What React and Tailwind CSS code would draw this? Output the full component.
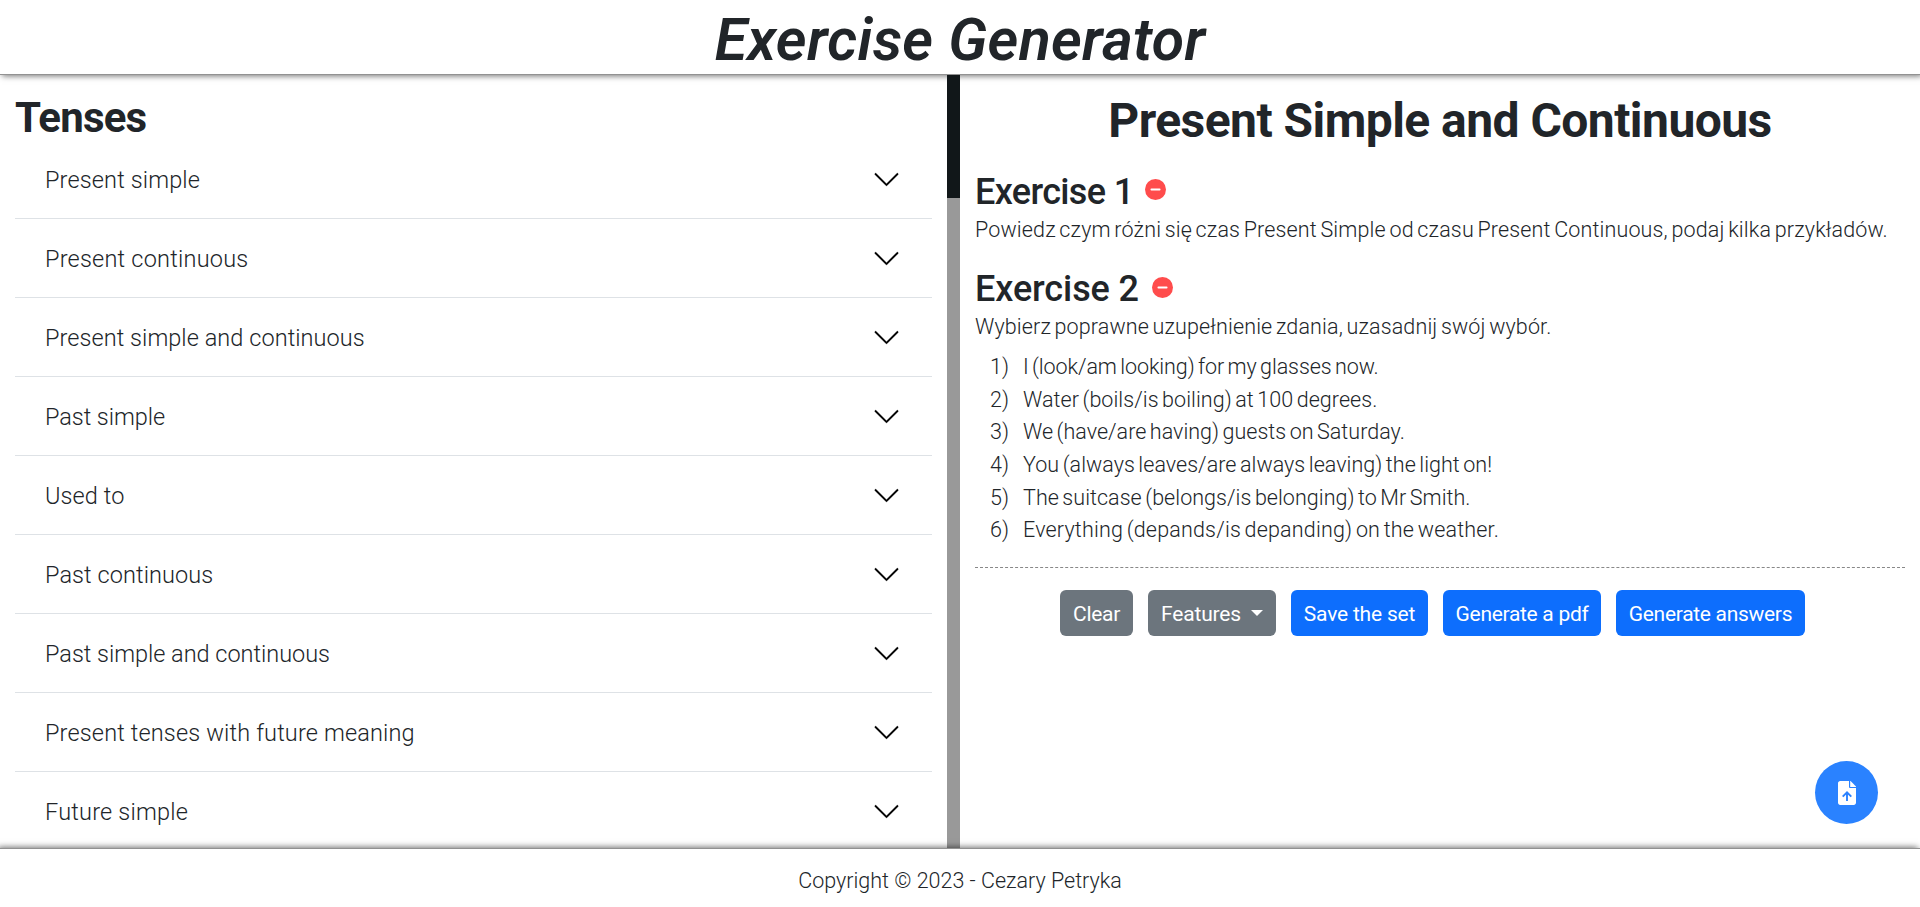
const topics = [
  ["Present simple", "tracking-[0.14px]"],
  ["Present continuous", "tracking-[0.22px]"],
  ["Present simple and continuous", "tracking-[0.06px]"],
  ["Past simple", "tracking-[-0.06px]"],
  ["Used to", "tracking-[0.1px]"],
  ["Past continuous", "tracking-[0.08px]"],
  ["Past simple and continuous", "tracking-[-0.02px]"],
  ["Present tenses with future meaning", "tracking-[0.15px]"],
  ["Future simple", "tracking-[0.2px]"],
];

const sentences = [
  ["I (look/am looking) for my glasses now.", "tracking-[-0.08px]"],
  ["Water (boils/is boiling) at 100 degrees.", "tracking-[0.05px]"],
  ["We (have/are having) guests on Saturday.", "tracking-[0.02px]"],
  ["You (always leaves/are always leaving) the light on!", "tracking-[0.04px]"],
  ["The suitcase (belongs/is belonging) to Mr Smith.", "tracking-[0.04px]"],
  ["Everything (depands/is depanding) on the weather.", "tracking-[0.18px]"],
];

function Chevron() {
  return (
    <svg viewBox="0 0 16 16" className="mr-px size-[29px] shrink-0" fill="#000" stroke="#000" strokeWidth="0.12">
      <path
        fillRule="evenodd"
        d="M1.646 4.646a.5.5 0 0 1 .708 0L8 10.293l5.646-5.647a.5.5 0 0 1 .708.708l-6 6a.5.5 0 0 1-.708 0l-6-6a.5.5 0 0 1 0-.708z"
      />
    </svg>
  );
}

function RemoveIcon({ className }) {
  return (
    <svg viewBox="0 0 21 21" className={"size-[21px] shrink-0 " + className}>
      <circle cx="10.5" cy="10.5" r="10.5" fill="#ff4c4c" />
      <rect x="5.5" y="9.4" width="10" height="2.2" rx="0.8" fill="#fff" />
    </svg>
  );
}

function UploadIcon() {
  return (
    <svg viewBox="0 0 18 24" className="h-6 w-[18px]">
      <path
        fill="#fff"
        d="M2.2 0H11v5.800c0 .8.5 1.300 1.300 1.300H18v14.700c0 1.200-1 2.200-2.200 2.200H2.200C1 24 0 23 0 21.800V2.200C0 1 1 0 2.200 0Z"
      />
      <path fill="#fff" d="M12.200 0h.4L18 5.500V6h-5.800Z" />
      <path
        fill="none"
        stroke="#2a82ff"
        strokeWidth="1.900"
        d="M9 20v-8.200M4.700 15.700 9 11.400l4.300 4.300"
      />
    </svg>
  );
}

function ExerciseTitle({ children, className, iconClassName }) {
  return (
    <div className="flex h-10 items-center">
      <h3 className={"text-[36px] leading-10 font-medium whitespace-nowrap " + className}>{children}</h3>
      <RemoveIcon className={iconClassName} />
    </div>
  );
}

function Button({ children, className }) {
  return (
    <button
      className={
        "mr-[15px] flex h-[46px] items-center justify-center rounded-[6px] pt-[3px] text-[21px] whitespace-nowrap text-white " +
        className
      }
    >
      {children}
    </button>
  );
}

export default function App() {
  return (
    <div className="flex h-[907px] w-[1920px] flex-col overflow-hidden bg-white font-['Roboto',sans-serif] text-[#212529]">
      <header className="z-10 h-[75px] shrink-0 border-b border-[#929292] bg-white pt-[7px] text-center shadow-[2px_1px_6px_rgba(0,0,0,0.55)]">
        <h1 className="text-[59px] leading-[66px] font-semibold tracking-[0.300px] italic">Exercise Generator</h1>
      </header>

      <main className="flex h-[773px] shrink-0">
        <section className="flex w-[960px]">
          <div className="flex-1 overflow-hidden px-[15px] pt-5">
            <h2 className="h-[45px] text-[42px] leading-[45px] font-bold tracking-[-0.800px]">Tenses</h2>
            <ul>
              {topics.map(([name, spacing]) => (
                <li
                  key={name}
                  className="flex h-[79px] items-center justify-between border-b border-[#dee2e6] px-[30px]"
                >
                  <span className={"pt-[2px] text-[23.500px] leading-8 font-light " + spacing}>{name}</span>
                  <Chevron />
                </li>
              ))}
            </ul>
          </div>
          <div className="w-[13px] bg-[#999999]">
            <div className="relative z-20 h-[123px] bg-[#111719]" />
          </div>
        </section>

        <section className="w-[960px] px-[15px] pt-4">
          <h2 className="text-center text-[48px] leading-[59px] font-bold tracking-[-0.550px]">
            Present Simple and Continuous
          </h2>

          <div className="mt-[22px]">
            <ExerciseTitle className="tracking-[-0.650px]" iconClassName="mb-[5px] ml-3">
              Exercise 1
            </ExerciseTitle>
            <p className="mt-px text-[21.500px] leading-[33px] font-light tracking-[0.146px] [word-spacing:-1.800px] whitespace-nowrap">
              Powiedz czym różni się czas Present Simple od czasu Present Continuous, podaj kilka przykładów.
            </p>
          </div>

          <div className="mt-[23px]">
            <ExerciseTitle className="tracking-[-0.100px]" iconClassName="mb-1 ml-[13px]">
              Exercise 2
            </ExerciseTitle>
            <p className="mt-px text-[21.500px] leading-[33px] font-light tracking-[0.130px] [word-spacing:-1.800px] whitespace-nowrap">
              Wybierz poprawne uzupełnienie zdania, uzasadnij swój wybór.
            </p>
            <ol className="mt-2 text-[21.500px] leading-[32.670px] font-light">
              {sentences.map(([text, spacing], i) => (
                <li key={text} className="flex whitespace-nowrap">
                  <span className="mr-[14px] w-[34px] text-right">{i + 1})</span>
                  <span className={"[word-spacing:-1.800px] " + spacing}>{text}</span>
                </li>
              ))}
            </ol>
          </div>

          <div className="mt-5 flex justify-center border-t border-dashed border-[#888] pt-[22px]">
            <Button className="w-[73px] bg-[#6c757d] tracking-[-0.300px]">Clear</Button>
            <Button className="w-[128px] gap-[10px] bg-[#6c757d] tracking-[-0.150px]">
              Features
              <span className="mb-[3px] border-x-[6px] border-t-[6px] border-x-transparent border-t-white" />
            </Button>
            <Button className="w-[137px] bg-[#0d6efd] tracking-[-0.200px]">Save the set</Button>
            <Button className="w-[158px] bg-[#0d6efd] tracking-[-0.300px]">Generate a pdf</Button>
            <Button className="w-[189px] bg-[#0d6efd] tracking-[-0.300px]">Generate answers</Button>
          </div>
        </section>
      </main>

      <footer className="z-10 h-[59px] shrink-0 border-t border-[#929292] bg-white pt-4 text-center text-[21.500px] leading-8 font-light shadow-[-2px_-1px_6px_rgba(0,0,0,0.55)]">
        Copyright © 2023 - Cezary Petryka
      </footer>

      <button className="absolute top-[761px] left-[1815px] z-20 flex size-[63px] items-center justify-center rounded-full bg-[#2a82ff]">
        <UploadIcon />
      </button>
    </div>
  );
}
